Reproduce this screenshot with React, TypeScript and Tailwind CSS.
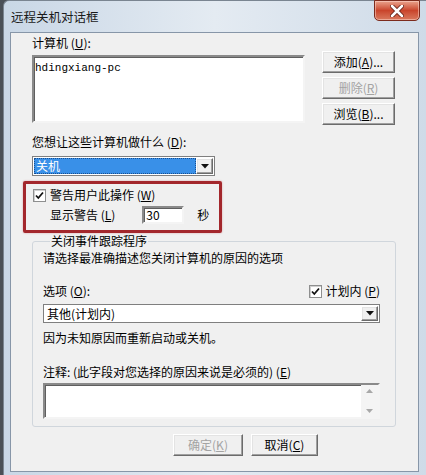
import React from "react";

const raised =
  "border border-t-white border-l-white border-b-[#6b6b6b] border-r-[#6b6b6b] shadow-[inset_-1px_-1px_0_#a0a0a0,inset_1px_1px_0_#e3e3e3] bg-[#f0f0f0]";

const sunken =
  "border-2 border-t-[#8a8a8a] border-l-[#8a8a8a] border-b-[#f4f4f4] border-r-[#f4f4f4] shadow-[inset_1px_1px_0_#5f5f5f] bg-white";

function Btn({
  children,
  disabled,
  className = "",
}: {
  children: React.ReactNode;
  disabled?: boolean;
  className?: string;
}) {
  return (
    <div
      className={`${raised} h-[22px] flex items-center justify-center ${
        disabled ? "text-[#a3a3a3]" : "text-black"
      } ${className}`}
    >
      {children}
    </div>
  );
}

function Check() {
  return (
    <div className="w-[13px] h-[13px] bg-white border border-[#8e8f8f] shadow-[inset_1px_1px_0_#d0d0d0] flex items-center justify-center">
      <svg width="9" height="9" viewBox="0 0 9 9">
        <path
          d="M1 4.5 L3.3 7 L8 1.5"
          fill="none"
          stroke="#111"
          strokeWidth="1.8"
        />
      </svg>
    </div>
  );
}

function ArrowBtn({ className = "" }: { className?: string }) {
  return (
    <div
      className={`${raised} w-[17px] h-full flex items-center justify-center ${className}`}
    >
      <svg width="8" height="5" viewBox="0 0 8 5">
        <path d="M0 0 H8 L4 4.5 Z" fill="#111" />
      </svg>
    </div>
  );
}

export default function App() {
  return (
    <div className="w-[426px] h-[475px] bg-[#4a5057] pl-[3px] font-['Noto_Sans_CJK_SC',sans-serif] text-[12px] leading-[16px] text-black overflow-hidden">
      <div className="h-full rounded-tl-[6px] border-t border-l border-[#7a8591] bg-linear-to-r from-[#c9d7e6] via-[#e4ebf2] to-[#cfdbe8] flex flex-col">
        {/* title bar */}
        <div className="h-[31px] flex items-start shrink-0">
          <span className="ml-[7px] mt-[8px] text-[12.5px] text-[#1a1a1a]">
            远程关机对话框
          </span>
          <div className="ml-auto mr-[6px] -mt-px w-[46px] h-[21px] rounded-b-[5px] border border-[#7c2b1d] bg-linear-to-b from-[#e9a38d] via-[#c9442b] to-[#d9785d] shadow-[inset_0_0_0_1px_rgba(255,220,210,0.5)] flex items-center justify-center">
            <svg width="14" height="12" viewBox="0 0 14 12">
              <path
                d="M2 1 L12 11 M12 1 L2 11"
                stroke="#5a1a10"
                strokeWidth="4.2"
                strokeLinecap="round"
              />
              <path
                d="M2 1 L12 11 M12 1 L2 11"
                stroke="#fff"
                strokeWidth="2.6"
                strokeLinecap="round"
              />
            </svg>
          </div>
        </div>

        {/* client area */}
        <div className="ml-[6px] w-[409px] h-[440px] border border-[#8796a8] bg-[#f0f0f0] pl-[21px] pr-[23px] pt-[2px] flex flex-col">
          {/* computers */}
          <div className="flex">
            <div className="flex flex-col w-[273px]">
              <span>
                计算机 (<u>U</u>):
              </span>
              <div className={`${sunken} mt-[4px] h-[68px] px-[1px] pt-[1px]`}>
                <span className="font-['Liberation_Mono',monospace] text-[11px] leading-[14px]">
                  hdingxiang-pc
                </span>
              </div>
            </div>
            <div className="ml-auto mt-[16px] flex flex-col gap-[4px] w-[73px]">
              <Btn>
                添加(<u>A</u>)...
              </Btn>
              <Btn disabled>
                删除(<u>R</u>)
              </Btn>
              <Btn>
                浏览(<u>B</u>)...
              </Btn>
            </div>
          </div>

          <span className="mt-[9px]">
            您想让这些计算机做什么 (<u>D</u>):
          </span>
          <div className="mt-[6px] w-[183px] h-[20px] border border-[#7f7f7f] bg-white p-px flex">
            <div className="flex-1 bg-[#3990e8] text-white pl-[2px] leading-[16px] outline-1 outline-dotted outline-[#1a4f8f] -outline-offset-1">
              关机
            </div>
            <ArrowBtn />
          </div>

          {/* highlighted warning box */}
          <div className="-ml-[9px] mt-[5px] w-[199px] h-[52px] border-[3px] border-[#a3272c] rounded-[2px] shadow-[0_0_2px_#d89a9c] pl-[7px] pt-[3px] flex flex-col">
            <div className="flex items-center gap-[4px] h-[16px]">
              <Check />
              <span>
                警告用户此操作 (<u>W</u>)
              </span>
            </div>
            <div className="flex items-center mt-[3px] pl-[17px] h-[18px]">
              <span>
                显示警告 (<u>L</u>)
              </span>
              <div className={`${sunken} ml-[27px] w-[42px] h-[18px] pl-[2px] leading-[14px]`}>
                30
              </div>
              <span className="ml-[13px]">秒</span>
            </div>
          </div>

          {/* shutdown event tracker */}
          <fieldset className="mt-0 w-[364px] h-[194px] border border-[#d0d6dc] rounded-[3px] pl-[10px] pr-[15px] flex flex-col">
            <legend className="ml-[7px] px-[1px] leading-[16px]">关闭事件跟踪程序</legend>
            <span className="mt-[1px]">请选择最准确描述您关闭计算机的原因的选项</span>
            <div className="mt-[17px] flex items-center justify-between h-[16px]">
              <span>
                选项 (<u>O</u>):
              </span>
              <div className="flex items-center gap-[4px]">
                <Check />
                <span>
                  计划内 (<u>P</u>)
                </span>
              </div>
            </div>
            <div className="mt-[5px] h-[19px] border border-[#7f7f7f] bg-white p-px flex">
              <div className="flex-1 pl-[2px] leading-[15px]">其他(计划内)</div>
              <ArrowBtn />
            </div>
            <span className="mt-[7px]">因为未知原因而重新启动或关机。</span>
            <span className="mt-[18px]">注释: (此字段对您选择的原因来说是必须的) (<u>E</u>)</span>
            <div className={`${sunken} mt-[3px] h-[36px] flex justify-end`}>
              <div className="w-[17px] h-full bg-[#f4f4f4] flex flex-col items-center justify-between py-[4px]">
                <svg width="7" height="4" viewBox="0 0 7 4">
                  <path d="M0 4 H7 L3.5 0 Z" fill="#a8a8a8" />
                </svg>
                <svg width="7" height="4" viewBox="0 0 7 4">
                  <path d="M0 0 H7 L3.5 4 Z" fill="#a8a8a8" />
                </svg>
              </div>
            </div>
          </fieldset>

          {/* dialog buttons */}
          <div className="mt-[7px] ml-[141px] flex gap-[8px]">
            <Btn disabled className="w-[70px]">
              确定(<u>K</u>)
            </Btn>
            <Btn className="w-[67px]">
              取消(<u>C</u>)
            </Btn>
          </div>
        </div>
      </div>
    </div>
  );
}
